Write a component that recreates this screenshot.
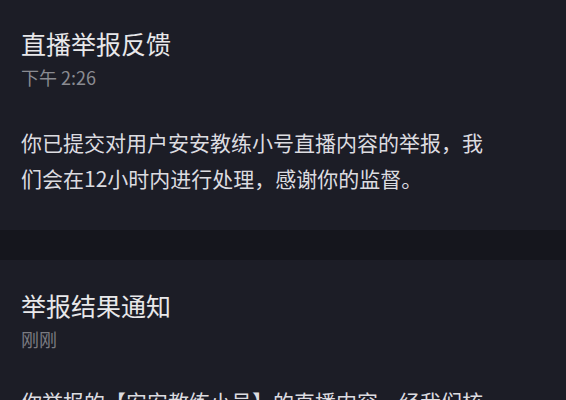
const FONT = { fontFamily: '"Noto Sans CJK SC", "Noto Sans", sans-serif' };

interface NoticeProps {
  title: string;
  time: string;
  body: string;
  timeClass: string;
  padTop: string;
  bodyGap: string;
}

function Notice({ title, time, body, timeClass, padTop, bodyGap }: NoticeProps) {
  return (
    <div className={`bg-[#1c1d26] pl-[21px] pr-[72px] pb-[34px] ${padTop}`}>
      <div className="text-[25px] leading-[34px] text-[#e8e8ea]">{title}</div>
      <div className={`mt-[5px] text-[18px] leading-[24px] ${timeClass}`}>{time}</div>
      <p className={`${bodyGap} text-[21px] leading-[36px] text-[#dcdce0]`}>{body}</p>
    </div>
  );
}

export default function App() {
  return (
    <div className="h-[400px] w-[566px] overflow-hidden bg-[#15161d]" style={FONT}>
      <Notice
        title="直播举报反馈"
        time="下午 2:26"
        timeClass="text-[#8a8b91]"
        padTop="pt-[26px]"
        bodyGap="mt-[35px]"
        body="你已提交对用户安安教练小号直播内容的举报，我们会在12小时内进行处理，感谢你的监督。"
      />
      <div className="h-[30px]" />
      <Notice
        title="举报结果通知"
        time="刚刚"
        timeClass="text-[#7a7b81]"
        padTop="pt-[28px]"
        bodyGap="mt-[32px]"
        body="你举报的【安安教练小号】的直播内容，经我们核实，确认存在违规行为，已依据相关规定进行处理，感谢你的监督。"
      />
    </div>
  );
}
